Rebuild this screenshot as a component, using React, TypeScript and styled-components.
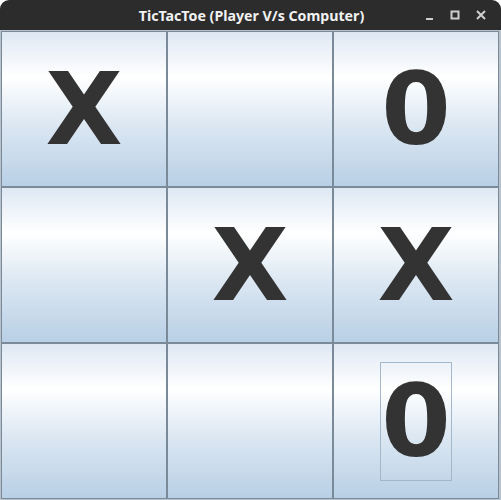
import React from "react";
import styled, { createGlobalStyle } from "styled-components";

const Global = createGlobalStyle`
  html, body { margin: 0; padding: 0; background: #ffffff; }
  #root { width: 501px; height: 500px; }
`;

const Window = styled.div`
  width: 501px;
  height: 500px;
  display: flex;
  flex-direction: column;
  overflow: hidden;
`;

const TitleBar = styled.div`
  height: 30px;
  flex: 0 0 30px;
  background: #2c2c2c;
  border-radius: 9px 9px 0 0;
  display: grid;
  grid-template-columns: 1fr auto 1fr;
  align-items: center;
  box-sizing: border-box;
`;

const Title = styled.div`
  grid-column: 2;
  font-family: "Noto Sans", "DejaVu Sans", sans-serif;
  font-weight: 700;
  font-size: 14.2px;
  color: #f2f2f2;
  padding-left: 2px;
  padding-top: 1px;
  white-space: nowrap;
`;

const Controls = styled.div`
  grid-column: 3;
  justify-self: end;
  display: flex;
  align-items: center;
  padding-right: 7px;
`;

const CtrlButton = styled.div`
  width: 26px;
  height: 30px;
  display: flex;
  align-items: center;
  justify-content: center;
  color: #cfcfcf;
`;

const Frame = styled.div`
  flex: 1;
  background: #b8c2cc;
  padding: 1px 0 0 1px;
  box-sizing: border-box;
`;

const Board = styled.div`
  display: grid;
  grid-template-columns: repeat(3, 166px);
  grid-template-rows: repeat(3, 156px);
`;

const Cell = styled.div`
  box-sizing: border-box;
  border: 1px solid #7a8a99;
  background: linear-gradient(
    to bottom,
    #dde8f3 0px,
    #ffffff 46px,
    #dde8f3 92px,
    #b8cfe5 156px
  );
  background-origin: border-box;
  display: flex;
  align-items: center;
  justify-content: center;
`;

const Mark = styled.span<{ $focused?: boolean }>`
  font-family: "DejaVu Sans", sans-serif;
  font-weight: 700;
  font-size: 100px;
  line-height: normal;
  color: #333333;
  outline: ${(p) => (p.$focused ? "1px solid #a3b8cc" : "none")};
  outline-offset: 0px;
`;

const cells = ["X", "", "0", "", "X", "X", "", "", "0"];

export default function App() {
  return (
    <>
      <Global />
      <Window>
        <TitleBar>
          <Title>TicTacToe (Player V/s Computer)</Title>
          <Controls>
            <CtrlButton>
              <svg width="12" height="12" viewBox="0 0 12 12">
                <rect x="3" y="9" width="7" height="2" fill="currentColor" />
              </svg>
            </CtrlButton>
            <CtrlButton>
              <svg width="12" height="12" viewBox="0 0 12 12">
                <rect x="2.5" y="2.5" width="7" height="7" fill="none" stroke="currentColor" strokeWidth="2" />
              </svg>
            </CtrlButton>
            <CtrlButton>
              <svg width="12" height="12" viewBox="0 0 12 12">
                <path d="M2 2 L10 10 M10 2 L2 10" stroke="currentColor" strokeWidth="2" />
              </svg>
            </CtrlButton>
          </Controls>
        </TitleBar>
        <Frame>
          <Board>
            {cells.map((c, i) => (
              <Cell key={i}>
                {c && <Mark $focused={i === 8}>{c}</Mark>}
              </Cell>
            ))}
          </Board>
        </Frame>
      </Window>
    </>
  );
}
